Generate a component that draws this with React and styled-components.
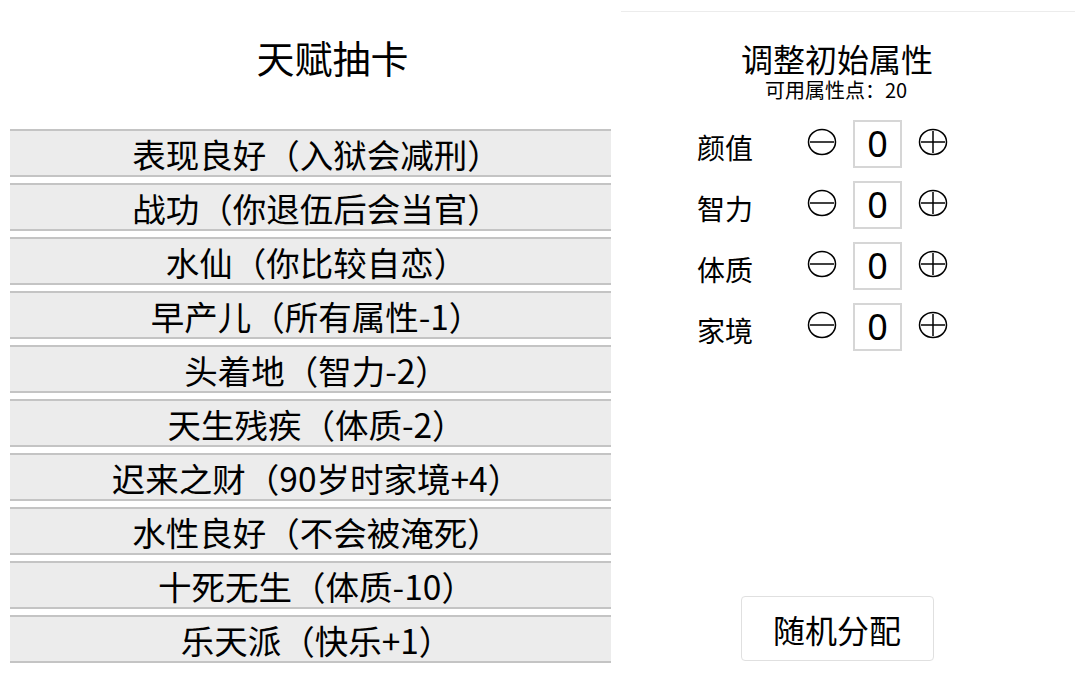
import React from 'react';
import styled, { createGlobalStyle } from 'styled-components';

const GlobalStyle = createGlobalStyle`
  body {
    margin: 0;
    background: #fff;
    color: #000;
    font-family: "Noto Sans CJK SC", "Noto Sans", sans-serif;
  }
`;

const Page = styled.div`
  display: flex;
  align-items: flex-start;
  height: 673px;
  overflow: hidden;
`;

const TalentPanel = styled.section`
  width: 601px;
  margin-left: 10px;
  display: flex;
  flex-direction: column;
`;

const TalentTitle = styled.h1`
  margin: 0;
  height: 129px;
  display: flex;
  align-items: center;
  justify-content: center;
  padding-bottom: 16px;
  padding-left: 44px;
  box-sizing: border-box;
  font-size: 38px;
  font-weight: 400;
`;

const TalentList = styled.ul`
  list-style: none;
  margin: 0;
  padding: 0;
  display: flex;
  flex-direction: column;
  gap: 6px;
`;

const TalentItem = styled.li`
  height: 48px;
  box-sizing: border-box;
  border-top: 2px solid #c4c4c4;
  border-bottom: 2px solid #c4c4c4;
  background: #ececec;
  display: flex;
  align-items: center;
  justify-content: center;
  padding-left: 12px;
  font-size: 33.5px;
  line-height: 1;
  padding-top: 2px;
  white-space: nowrap;
`;

/* full-width punctuation drawn centred in a whole em cell */
const Punct = styled.span`
  display: inline-block;
  width: 1em;
  text-align: center;
`;

const PropertyPanel = styled.section`
  width: 454px;
  margin-left: 10px;
  margin-top: 11px;
  height: 662px;
  box-sizing: border-box;
  border-top: 1px solid #ececec;
  display: flex;
  flex-direction: column;
  align-items: center;
  padding-left: 2px;
  padding-right: 24px;
`;

const PropertyTitle = styled.h2`
  margin: 26px 0 0;
  font-size: 32px;
  line-height: 40px;
  font-weight: 400;
`;

const PointsLeft = styled.div`
  font-size: 20px;
  line-height: 24px;
  margin-left: -2px;
`;

const PropertyTable = styled.div`
  margin-top: 11px;
  align-self: flex-start;
  margin-left: 74px;
  display: flex;
  flex-direction: column;
`;

const PropertyRow = styled.div`
  height: 61px;
  display: flex;
  align-items: center;
`;

const PropertyName = styled.div`
  width: 110px;
  font-size: 28px;
  line-height: 1;
  padding-top: 6px;
`;

const StepButton = styled.button`
  width: 30px;
  height: 30px;
  padding: 0;
  border: none;
  background: none;
  display: flex;
  align-items: center;
  justify-content: center;
  cursor: pointer;
  margin-top: -4px;
`;

const ValueBox = styled.div`
  width: 49px;
  height: 48px;
  box-sizing: border-box;
  border: 2px solid #d6d6d6;
  margin: 0 16px;
  display: flex;
  align-items: center;
  justify-content: center;
  font-family: "Noto Sans", "Open Sans", sans-serif;
  font-size: 36px;
  line-height: 1;
`;

const RandomButton = styled.button`
  margin-top: auto;
  margin-bottom: 12px;
  width: 193px;
  height: 65px;
  box-sizing: border-box;
  background: #fff;
  border: 1px solid #e0e0e0;
  border-radius: 4px;
  font-family: "Noto Sans CJK SC", sans-serif;
  font-size: 32px;
  color: #000;
  padding: 0;
  line-height: 1;
`;

const CircleIcon = ({ plus }) => (
  <svg width="30" height="30" viewBox="0 0 30 30">
    <ellipse cx="15" cy="15" rx="13.5" ry="12.5" fill="none" stroke="#000" strokeWidth="1.5" />
    <line x1="3" y1="15" x2="27" y2="15" stroke="#000" strokeWidth="1.5" />
    {plus && <line x1="15" y1="4" x2="15" y2="26" stroke="#000" strokeWidth="1.5" />}
  </svg>
);

const talents = [
  ['表现良好', '入狱会减刑'],
  ['战功', '你退伍后会当官'],
  ['水仙', '你比较自恋'],
  ['早产儿', '所有属性-1'],
  ['头着地', '智力-2'],
  ['天生残疾', '体质-2'],
  ['迟来之财', '90岁时家境+4'],
  ['水性良好', '不会被淹死'],
  ['十死无生', '体质-10'],
  ['乐天派', '快乐+1'],
];

const properties = ['颜值', '智力', '体质', '家境'];

export default function App() {
  return (
    <>
      <GlobalStyle />
      <Page>
        <TalentPanel>
          <TalentTitle>天赋抽卡</TalentTitle>
          <TalentList>
            {talents.map(([name, desc]) => (
              <TalentItem key={name}>
                {name}<Punct>（</Punct>{desc}<Punct>）</Punct>
              </TalentItem>
            ))}
          </TalentList>
        </TalentPanel>
        <PropertyPanel>
          <PropertyTitle>调整初始属性</PropertyTitle>
          <PointsLeft>可用属性点<Punct>：</Punct>20</PointsLeft>
          <PropertyTable>
            {properties.map((p) => (
              <PropertyRow key={p}>
                <PropertyName>{p}</PropertyName>
                <StepButton><CircleIcon /></StepButton>
                <ValueBox>0</ValueBox>
                <StepButton><CircleIcon plus /></StepButton>
              </PropertyRow>
            ))}
          </PropertyTable>
          <RandomButton>随机分配</RandomButton>
        </PropertyPanel>
      </Page>
    </>
  );
}
